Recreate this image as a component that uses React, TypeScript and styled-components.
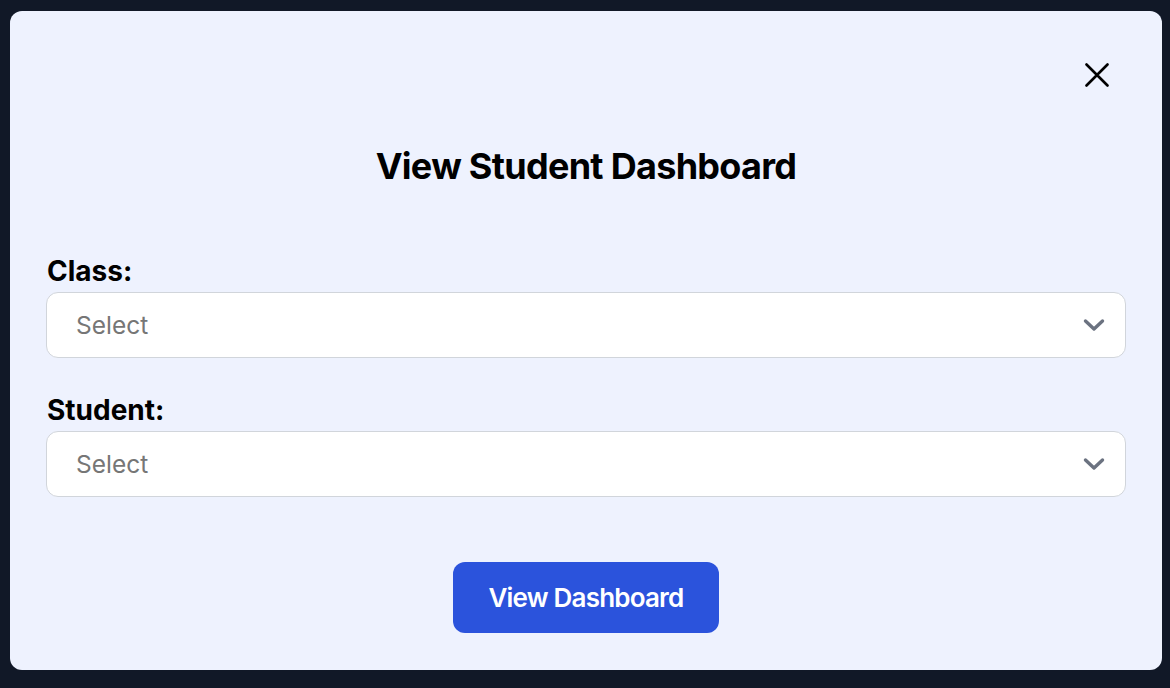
import React from "react";
import styled, { createGlobalStyle } from "styled-components";

const Global = createGlobalStyle`
  html, body { margin: 0; padding: 0; background: #111827; }
  body { font-family: Inter, "Noto Sans", sans-serif; }
  * { box-sizing: border-box; }
`;

const Screen = styled.div`
  width: 1170px;
  height: 688px;
  padding: 11px 8px 18px 10px;
  background: #111827;
`;

const Modal = styled.div`
  height: 100%;
  background: #eef2fe;
  border-radius: 12px;
  padding: 50px 36px 36px 36px;
  display: flex;
  flex-direction: column;
`;

const TopRow = styled.div`
  display: flex;
  justify-content: flex-end;
  height: 28px;
  padding-right: 15px;
`;

const CloseButton = styled.button`
  border: none;
  background: transparent;
  padding: 0;
  width: 28px;
  height: 28px;
  display: flex;
  align-items: center;
  justify-content: center;
  cursor: pointer;
  color: #000;
`;

const Title = styled.h2`
  margin: 55px 0 0;
  text-align: center;
  font-size: 36px;
  line-height: 44px;
  letter-spacing: -0.7px;
  font-weight: 700;
  color: #000;
`;

const Field = styled.div<{ $top: number }>`
  display: flex;
  flex-direction: column;
  margin-top: ${(p) => p.$top}px;
`;

const Label = styled.label`
  font-size: 28px;
  line-height: 34px;
  font-weight: 700;
  color: #000;
  padding-left: 1px;
  margin-bottom: 4px;
`;

const SelectBox = styled.div`
  height: 66px;
  background: #fff;
  border: 1px solid #d1d5db;
  border-radius: 12px;
  display: flex;
  align-items: center;
  justify-content: space-between;
  padding: 0 20px 0 29px;
`;

const Placeholder = styled.span`
  font-size: 24.5px;
  color: #767676;
`;

const Footer = styled.div`
  display: flex;
  justify-content: center;
  margin-top: 65px;
`;

const PrimaryButton = styled.button`
  width: 266px;
  height: 71px;
  border: none;
  border-radius: 12px;
  background: #2b53dc;
  color: #fff;
  font-family: Inter, "Noto Sans", sans-serif;
  font-size: 26px;
  letter-spacing: -0.8px;
  font-weight: 600;
  cursor: pointer;
`;

const CloseIcon = () => (
  <svg width="24" height="24" viewBox="0 0 24 24">
    <path d="M1.5 1.5 L22.5 22.5 M22.5 1.5 L1.5 22.5" stroke="#000" strokeWidth="2.6" strokeLinecap="round" fill="none" />
  </svg>
);

const Chevron = () => (
  <svg width="22" height="14" viewBox="0 0 22 14">
    <path d="M2.5 3 L11 11 L19.5 3" stroke="#6b7280" strokeWidth="3.4" strokeLinecap="round" strokeLinejoin="round" fill="none" />
  </svg>
);

const SelectField = ({ label, top }: { label: string; top: number }) => (
  <Field $top={top}>
    <Label>{label}</Label>
    <SelectBox>
      <Placeholder>Select</Placeholder>
      <Chevron />
    </SelectBox>
  </Field>
);

export default function App() {
  return (
    <>
      <Global />
      <Screen>
        <Modal>
          <TopRow>
            <CloseButton aria-label="Close">
              <CloseIcon />
            </CloseButton>
          </TopRow>
          <Title>View Student Dashboard</Title>
          <SelectField label="Class:" top={66} />
          <SelectField label="Student:" top={35} />
          <Footer>
            <PrimaryButton>View Dashboard</PrimaryButton>
          </Footer>
        </Modal>
      </Screen>
    </>
  );
}
